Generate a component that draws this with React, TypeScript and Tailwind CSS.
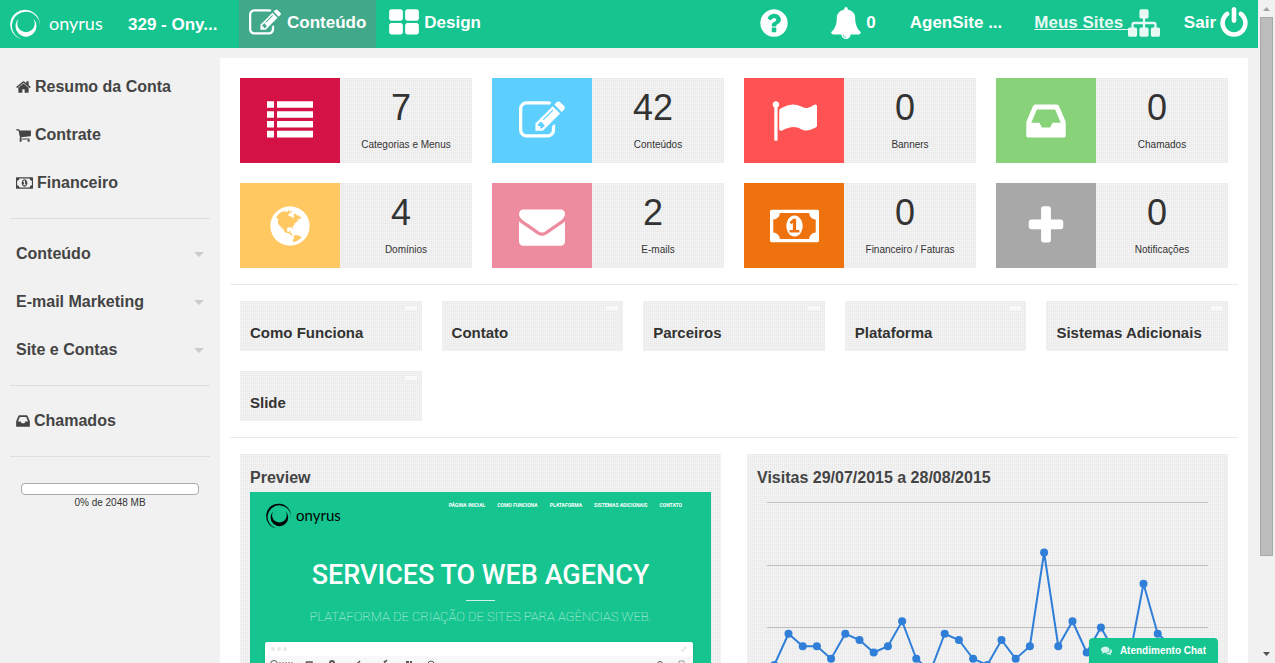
import type { ReactNode } from "react";

type IconProps = { d: string; className: string; x?: number; width?: number };

function Icon({ d, className, x = 0, width = 1792 }: IconProps) {
  return (
    <svg viewBox={`${x} 0 ${width} 1792`} className={className} fill="currentColor" aria-hidden="true">
      <path d={d} />
    </svg>
  );
}

const EDIT =
  "M888 1184l116-116-152-152-116 116v56h96v96h56zm440-720q-16-16-33 1l-350 350q-17 17-1 33t33-1l350-350q17-17 1-33zm80 594v190q0 119-84.5 203.5t-203.5 84.5h-832q-119 0-203.5-84.5t-84.5-203.5v-832q0-119 84.5-203.5t203.5-84.5h832q63 0 117 25 15 7 18 23 3 17-9 29l-49 49q-14 14-32 8-23-6-45-6h-832q-66 0-113 47t-47 113v832q0 66 47 113t113 47h832q66 0 113-47t47-113v-126q0-13 9-22l64-64q15-15 35-7t20 29zm-96-738l288 288-672 672h-288v-288zm444 132l-92 92-288-288 92-92q28-28 68-28t68 28l152 152q28 28 28 68t-28 68z";
const GRID =
  "M832 1024v384q0 52-38 90t-90 38h-512q-52 0-90-38t-38-90v-384q0-52 38-90t90-38h512q52 0 90 38t38 90zm0-768v384q0 52-38 90t-90 38h-512q-52 0-90-38t-38-90v-384q0-52 38-90t90-38h512q52 0 90 38t38 90zm896 768v384q0 52-38 90t-90 38h-512q-52 0-90-38t-38-90v-384q0-52 38-90t90-38h512q52 0 90 38t38 90zm0-768v384q0 52-38 90t-90 38h-512q-52 0-90-38t-38-90v-384q0-52 38-90t90-38h512q52 0 90 38t38 90z";
const QUESTION =
  "M1024 1376v-192q0-14-9-23t-23-9h-192q-14 0-23 9t-9 23v192q0 14 9 23t23 9h192q14 0 23-9t9-23zm256-672q0-88-55.5-163t-138.5-116-170-41q-243 0-371 213-15 24 8 42l132 100q7 6 19 6 16 0 25-12 53-68 86-92 34-24 86-24 48 0 85.5 26t37.5 59q0 38-20 61t-68 45q-63 28-115.5 86.5t-52.5 125.5v36q0 14 9 23t23 9h192q14 0 23-9t9-23q0-19 21.5-49.5t54.5-49.5q32-18 49-28.5t46-35 44.5-48 28-60.5 12.5-81zm384 192q0 209-103 385.5t-279.5 279.5-385.5 103-385.5-103-279.5-279.5-103-385.5 103-385.5 279.5-279.5 385.5-103 385.5 103 279.5 279.5 103 385.5z";
const BELL =
  "M912 1696q0-16-16-16-59 0-101.5-42.5t-42.5-101.5q0-16-16-16t-16 16q0 73 51.5 124.5t124.5 51.5q16 0 16-16zm816-288q0 52-38 90t-90 38h-448q0 106-75 181t-181 75-181-75-75-181h-448q-52 0-90-38t-38-90q50-42 91-88t85-119.5 74.5-158.5 50-206 19.5-260q0-152 117-282.5t307-158.5q-8-19-8-39 0-40 28-68t68-28 68 28 28 68q0 20-8 39 190 28 307 158.5t117 282.5q0 139 19.5 260t50 206 74.5 158.5 85 119.5 91 88z";
const SITEMAP =
  "M1792 1248v320q0 40-28 68t-68 28h-320q-40 0-68-28t-28-68v-320q0-40 28-68t68-28h96v-192h-512v192h96q40 0 68 28t28 68v320q0 40-28 68t-68 28h-320q-40 0-68-28t-28-68v-320q0-40 28-68t68-28h96v-192h-512v192h96q40 0 68 28t28 68v320q0 40-28 68t-68 28h-320q-40 0-68-28t-28-68v-320q0-40 28-68t68-28h96v-192q0-52 38-90t90-38h512v-192h-96q-40 0-68-28t-28-68v-320q0-40 28-68t68-28h320q40 0 68 28t28 68v320q0 40-28 68t-68 28h-96v192h512q52 0 90 38t38 90v192h96q40 0 68 28t28 68z";
const POWER =
  "M1664 896q0 156-61 298t-164 245-245 164-298 61-298-61-245-164-164-245-61-298q0-182 80.5-343t226.5-270q43-32 95.5-25t83.5 50q32 42 24.5 94.5t-49.5 84.5q-98 74-151.5 181t-53.5 228q0 104 40.5 198.5t109.5 163.5 163.5 109.5 198.5 40.5 198.5-40.5 163.5-109.5 109.5-163.5 40.5-198.5q0-121-53.5-228t-151.5-181q-42-32-49.5-84.5t24.5-94.5q31-43 84-50t95 25q146 109 226.5 270t80.5 343zm-640-768v640q0 52-38 90t-90 38-90-38-38-90v-640q0-52 38-90t90-38 90 38 38 90z";
const HOME =
  "M1472 992v480q0 26-19 45t-45 19h-384v-384h-256v384h-384q-26 0-45-19t-19-45v-480q0-1 .5-3t.5-3l575-474 575 474q1 2 1 6zm223-69l-62 74q-8 9-21 11h-3q-13 0-21-7l-692-577-692 577q-12 8-24 7-13-2-21-11l-62-74q-8-10-7-23.5t11-21.5l719-599q32-26 76-26t76 26l244 204v-195q0-14 9-23t23-9h192q14 0 23 9t9 23v408l219 182q10 8 11 21.5t-7 23.5z";
const CART =
  "M704 1536q0 52-38 90t-90 38-90-38-38-90 38-90 90-38 90 38 38 90zm896 0q0 52-38 90t-90 38-90-38-38-90 38-90 90-38 90 38 38 90zm128-1088v512q0 24-16.5 42.5t-40.5 21.5l-1044 122q13 60 13 70 0 16-24 64h920q26 0 45 19t19 45-19 45-45 19h-1024q-26 0-45-19t-19-45q0-11 8-31.5t16-36 21.5-40 15.5-29.5l-177-823h-204q-26 0-45-19t-19-45 19-45 45-19h256q16 0 28.5 6.5t19.5 15.5 13 24.5 8 26 5.5 29.5 4.5 26h1201q26 0 45 19t19 45z";
const MONEY =
  "M768 1152h384v-96h-128v-448h-114l-148 137 77 80q42-37 55-57h2v288h-128v96zm512-256q0 70-21 142t-59.5 134-101.5 101-138 39-138-39-101.5-101-59.5-134-21-142 21-142 59.5-134 101.5-101 138-39 138 39 101.5 101 59.5 134 21 142zm512 256v-512q-106 0-181-75t-75-181h-1152q0 106-75 181t-181 75v512q106 0 181 75t75 181h1152q0-106 75-181t181-75zm128-832v1152q0 26-19 45t-45 19h-1792q-26 0-45-19t-19-45v-1152q0-26 19-45t45-19h1792q26 0 45 19t19 45z";
const INBOX =
  "M1151 960h316q-1-3-2.5-8t-2.5-8l-212-496h-708l-212 496q-1 2-2.5 8t-2.5 8h316l95 192h320zm513 30v482q0 26-19 45t-45 19h-1408q-26 0-45-19t-19-45v-482q0-62 25-123l238-552q10-25 36.5-42t52.5-17h832q26 0 52.5 17t36.5 42l238 552q25 61 25 123z";
const FLAG =
  "M320 256q0 72-64 110v1266q0 13-9.5 22.5t-22.5 9.5h-64q-13 0-22.5-9.5t-9.5-22.5v-1266q-64-38-64-110 0-53 37.5-90.5t90.5-37.5 90.5 37.5 37.5 90.5zm1472 64v763q0 25-12.5 38.5t-39.5 27.5q-215 116-369 116-61 0-123.5-22t-108.5-48-115.5-48-142.5-22q-192 0-464 146-17 9-33 9-26 0-45-19t-19-45v-742q0-32 31-55 21-14 79-43 236-120 421-120 107 0 200 29t219 88q38 19 88 19 54 0 117.5-21t110-47 88-47 54.5-21q26 0 45 19t19 45z";
const GLOBE =
  "M896 128q209 0 385.5 103t279.5 279.5 103 385.5-103 385.5-279.5 279.5-385.5 103-385.5-103-279.5-279.5-103-385.5 103-385.5 279.5-279.5 385.5-103zm274 521q-2 1-9.5 9.5t-13.5 9.5q2 0 4.5-5t5-11 3.5-7q6-7 22-15 14-6 52-12 34-8 51 11-2-2 9.5-13t14.5-12q3-2 15-4.5t15-7.5l2-22q-12 1-17.5-7t-6.5-21q0 2-6 8 0-7-4.5-8t-11.5 1-9 1q-10-3-15-7.5t-8-16.5-4-15q-2-5-9.5-11t-9.5-10q-1-2-2.5-5.5t-3-6.5-4-5.5-5.5-2.5-7 5-7.5 10-4.5 5q-3-2-6-1.5t-4.5 1-4.5 3-5 3.5q-3 2-8.5 3t-8.5 2q15-5-1-11-10-4-16-3 9-4 7.5-12t-8.5-14h5q-1-4-8.5-8.5t-17.5-8.5-13-6q-8-5-34-9.5t-33-.5q-5 6-4.5 10.5t4 14 3.5 12.5q1 6-5.5 13t-6.5 12q0 7 14 15.5t10 21.5q-3 8-16 16t-16 12q-5 8-1.5 18.5t10.5 16.5q2 2 1.5 4t-3.5 4.5-5.5 4-6.5 3.5l-3 2q-11 5-20.5-6t-13.5-26q-7-25-16-30-23-8-29 1-5-13-41-26-25-9-58-4 6-1 0-15-7-15-19-12 3-6 4-17.5t1-13.5q3-13 12-23 1-1 7-8.5t9.5-13.5.5-6q35 4 50-11 5-5 11.5-17t10.5-17q9-6 14-5.5t14.5 5.5 14.5 5q14 1 15.5-11t-7.5-20q12 1 3-17-4-7-8-9-12-4-27 5-8 4 2 8-1-1-9.5 10.5t-16.5 17.5-16-5q-1-1-5.5-13.5t-9.5-13.5q-8 0-16 15 3-8-11-15t-24-8q19-12-8-27-7-4-20.5-5t-19.5 4q-5 7-5.5 11.5t5 8 10.5 5.5 11.5 4 8.5 3q14 10 8 14-2 1-8.5 3.5t-11.5 4.5-6 4q-3 4 0 14t-2 14q-5-5-9-17.5t-7-16.5q7 9-25 6l-10-1q-4 0-16 2t-20.5 1-13.5-8q-4-8 0-20 1-4 4-2-4-3-11-9.5t-10-8.5q-46 15-94 41 6 1 12-1 5-2 13-6.5t10-5.5q34-14 42-7l5-5q14 16 20 25-7-4-30-1-20 6-22 12 7 12 5 18-4-3-11.5-10t-14.5-11-15-5q-16 0-22 1-146 80-235 222 7 7 12 8 4 1 5 9t2.5 11 11.5-3q9 8 3 19 1-1 44 27 19 17 21 21 3 11-10 18-1-2-9-9t-9-4q-3 5 .5 18.5t10.5 12.5q-7 0-9.5 16t-2.5 35.5-1 23.5l2 1q-3 12 5.5 34.5t21.5 19.5q-13 3 20 43 6 8 8 9 3 2 12 7.5t15 10 10 10.5q4 5 10 22.5t14 23.5q-2 6 9.5 20t10.5 23q-1 0-2.5 1t-2.5 1q3 7 15.5 14t15.5 13q1 3 2 10t3 11 8 2q2-20-24-62-15-25-17-29-3-5-5.5-15.5t-4.5-14.5q2 0 6 1.5t8.5 3.5 7.5 4 2 3q-3 7 2 17.5t12 18.5 17 19 12 13q6 6 14 19.5t0 13.5q9 0 20 10.5t17 19.5q5 8 8 26t5 24q2 7 8.5 13.5t12.5 9.5l16 8 13 7q5 2 18.5 10.5t21.5 11.5q10 4 16 4t14.5-2.5 13.5-3.5q15-2 29 15t21 21q36 19 55 11-2 1 .5 7.5t8 15.5 9 14.5 5.5 8.5q5 6 18 15t18 15q6-4 7-9-3 8 7 20t18 10q14-3 14-32-31 15-49-18 0-1-2.5-5.5t-4-8.5-2.5-8.5 0-7.5 5-3q9 0 10-3.5t-2-12.5-4-13q-1-8-11-20t-12-15q-5 9-16 8t-16-9q0 1-1.5 5.5t-1.5 6.5q-13 0-15-1 1-3 2.5-17.5t3.5-22.5q1-4 5.5-12t7.5-14.5 4-12.5-4.5-9.5-17.5-2.5q-19 1-26 20-1 3-3 10.5t-5 11.5-9 7q-7 3-24 2t-24-5q-13-8-22.5-29t-9.5-37q0-10 2.5-26.5t3-25-5.5-24.5q3-2 9-9.5t10-10.5q2-1 4.5-1.5t4.5 0 4-1.5 3-6q-1-1-4-3-3-3-4-3 7 3 28.5-1.5t27.5 1.5q15 11 22-2 0-1-2.5-9.5t-.5-13.5q5 27 29 9 3 3 15.5 5t17.5 5q3 2 7 5.5t5.5 4.5 5-.5 8.5-6.5q10 14 12 24 11 40 19 44 7 3 11 2t4.5-9.5 0-14-1.5-12.5l-1-8v-18l-1-8q-15-3-18.5-12t1.5-18.5 15-18.5q1-1 8-3.5t15.5-6.5 12.5-8q21-19 15-35 7 0 11-9-1 0-5-3t-7.5-5-4.5-2q9-5 2-16 5-3 7.5-11t7.5-10q9 12 21 2 8-8 1-16 5-7 20.5-10.5t18.5-9.5q7 2 8-2t1-12 3-12q4-5 15-9t13-5l17-11q3-4 0-4 18 2 31-11 10-11-6-20 3-6-3-9.5t-15-5.5q3-1 11.5-.5t10.5-1.5q15-10-7-16-17-5-43 12zm-163 877q206-36 351-189-3-3-12.5-4.5t-12.5-3.5q-18-7-24-8 1-7-2.5-13t-8-9-12.5-8-11-7q-2-2-7-6t-7-5.5-7.5-4.5-8.5-2-10 1l-3 1q-3 1-5.5 2.5t-5.5 3-4 3 0 2.5q-21-17-36-22-5-1-11-5.5t-10.5-7-10-1.5-11.5 7q-5 5-6 15t-2 13q-7-5 0-17.5t2-18.5q-3-6-10.5-4.5t-12 4.5-11.5 8.5-9 6.5-8.5 5.5-8.5 7.5q-3 4-6 12t-5 11q-2-4-11.5-6.5t-9.5-5.5q2 10 4 35t5 38q7 31-12 48-27 25-29 40-4 22 12 26 0 7-8 20.5t-7 21.5q0 6 2 16z";
const ENVELOPE =
  "M1792 710v794q0 66-47 113t-113 47h-1472q-66 0-113-47t-47-113v-794q44 49 101 87 362 246 497 345 57 42 92.5 65.5t94.5 48 110 24.5h2q51 0 110-24.5t94.5-48 92.5-65.5q170-123 498-345 57-39 100-87zm0-294q0 79-49 151t-122 123q-376 261-468 325-10 7-42.5 31t-54 38.5-52 32.5-57.5 27-50 9h-2q-23 0-50-9t-57.5-27-52-32.5-54-38.5-42.5-31q-91-64-262-182.5t-205-142.5q-62-42-117-115.5t-55-136.5q0-78 41.5-130t118.5-52h1472q65 0 112.5 47t47.5 113z";
const LIST =
  "M0 128h272v256h-272zm390 0h1402v256h-1402zm-390 384h272v256h-272zm390 0h1402v256h-1402zm-390 384h272v256h-272zm390 0h1402v256h-1402zm-390 384h272v256h-272zm390 0h1402v256h-1402z";
const PLUS =
  "M1568 736v192q0 40-28 68t-68 28h-384v416q0 40-28 68t-68 28h-192q-40 0-68-28t-28-68v-416h-384q-40 0-68-28t-28-68v-192q0-40 28-68t68-28h384v-416q0-40 28-68t68-28h192q40 0 68 28t28 68v416h384q40 0 68 28t28 68z";
const COMMENTS =
  "M1408 768q0 139-94 257t-256.5 186.5-353.5 68.5q-86 0-176-16-124 88-278 128-36 9-86 16h-3q-11 0-20.5-8t-11.5-21q-1-3-1-6.5t.5-6.5 2-6l2.5-5 3.5-5.5 4-5 4.5-5 4-4.5q5-6 23-25t26-29.5 22.5-29 25-38.5 20.5-44q-124-72-195-177t-71-224q0-139 94-257t256.5-186.5 353.5-68.5 353.5 68.5 256.5 186.5 94 257zm384 256q0 120-71 224.5t-195 176.5q10 24 20.5 44t25 38.5 22.5 29 26 29.5 23 25q1 1 4 4.5t4.5 5 4 5 3.5 5.5l2.5 5 2 6 .5 6.5-1 6.5q-3 14-13 22t-22 7q-50-7-86-16-154-40-278-128-90 16-176 16-271 0-472-132 58 4 88 4 161 0 309-45t264-129q125-92 192-212t67-254q0-77-23-152 129 71 204 178t75 230z";

const DOTTED = "bg-[conic-gradient(#e6e6e6_25%,#f2f2f2_0)] bg-[length:2px_2px]";

function LogoMark({ className }: { className: string }) {
  return (
    <svg viewBox="0 0 32 32" className={className} fill="currentColor" aria-hidden="true">
      <path d="M30.8 17A15.3 15.3 0 1 0 12 31A14.4 14.4 0 1 1 30.8 17z" />
      <path d="M9 10A10.8 10.8 0 1 0 24 10A9 9 0 1 1 9 10z" />
    </svg>
  );
}

function Header() {
  return (
    <header className="flex h-12 shrink-0 items-stretch bg-[#15c48f] text-[17px] leading-6 font-bold text-white">
      <a href="#inicio" className="flex w-[118px] items-center gap-2 pl-2.5">
        <LogoMark className="size-[31px]" />
        <span className="pb-0.5 font-['Lato'] text-lg leading-6 font-normal">onyrus</span>
      </a>
      <a href="#site" className="flex w-[121px] items-center pt-0.5 pl-2.5">
        329 - Ony...
      </a>
      <nav className="flex flex-1 items-stretch">
        <a href="#conteudo" className="flex items-center gap-1.5 bg-[#41a98a] px-2.5 pb-0.5">
          <Icon d={EDIT} className="size-8" />
          Conteúdo
        </a>
        <a href="#design" className="flex items-center gap-1 px-3 pb-0.5">
          <Icon d={GRID} className="size-8" />
          Design
        </a>
      </nav>
      <div className="flex items-center pr-2 pb-0.5">
        <button type="button" aria-label="Ajuda" className="mr-10">
          <Icon d={QUESTION} className="size-8" />
        </button>
        <button type="button" aria-label="Alertas" className="mr-[34px] flex items-center gap-1">
          <Icon d={BELL} className="size-8" />0
        </button>
        <a href="#conta" className="mr-8">
          AgenSite ...
        </a>
        <a href="#sites" className="mr-6 flex items-center opacity-90">
          <span className="underline">Meus Sites&nbsp;</span>
          <Icon d={SITEMAP} className="size-8" />
        </a>
        <a href="#sair" className="flex items-center gap-0.5">
          Sair
          <Icon d={POWER} className="size-8" />
        </a>
      </div>
    </header>
  );
}

function NavItem({ children, menu = false }: { children: ReactNode; menu?: boolean }) {
  return (
    <a href="#item" className="flex h-12 items-center gap-1 px-1.5 pt-0.5">
      {children}
      {menu && (
        <svg viewBox="0 0 10 5" className="ml-auto h-[5px] w-2.5 text-[#cccccc]" fill="currentColor" aria-hidden="true">
          <path d="M0 0h10l-5 5z" />
        </svg>
      )}
    </a>
  );
}

function Sidebar() {
  return (
    <aside className="w-[220px] shrink-0 px-2.5 pt-3.5">
      <nav className="text-base leading-6 font-bold text-[#444444]">
        <div className="border-b border-[#dedede] pb-3">
          <NavItem>
            <Icon d={HOME} x={64} width={1664} className="h-4 w-[15px]" />
            Resumo da Conta
          </NavItem>
          <NavItem>
            <Icon d={CART} x={64} width={1664} className="h-4 w-[15px]" />
            Contrate
          </NavItem>
          <NavItem>
            <Icon d={MONEY} width={1920} className="h-4 w-[17px]" />
            Financeiro
          </NavItem>
        </div>
        <div className="border-b border-[#dedede] pt-2.5 pb-3">
          <NavItem menu>Conteúdo</NavItem>
          <NavItem menu>E-mail Marketing</NavItem>
          <NavItem menu>Site e Contas</NavItem>
        </div>
        <div className="border-b border-[#dedede] pt-2.5 pb-3">
          <NavItem>
            <Icon d={INBOX} x={128} width={1536} className="h-4 w-3.5" />
            Chamados
          </NavItem>
        </div>
      </nav>
      <div className="mx-[11px] mt-[26px] h-3 rounded-[4px] border border-[#aaaaaa] bg-white" />
      <p className="text-center text-[10px] leading-4 text-[#333333]">0% de 2048 MB</p>
    </aside>
  );
}

const stats = [
  { value: 7, label: "Categorias e Menus", bg: "bg-[#d51245]", icon: LIST },
  { value: 42, label: "Conteúdos", bg: "bg-[#5ccfff]", icon: EDIT },
  { value: 0, label: "Banners", bg: "bg-[#ff5252]", icon: FLAG },
  { value: 0, label: "Chamados", bg: "bg-[#88d27a]", icon: INBOX },
  { value: 4, label: "Domínios", bg: "bg-[#ffc861]", icon: GLOBE },
  { value: 2, label: "E-mails", bg: "bg-[#ed8c9e]", icon: ENVELOPE },
  { value: 0, label: "Financeiro / Faturas", bg: "bg-[#ee730f]", icon: MONEY },
  { value: 0, label: "Notificações", bg: "bg-[#a8a8a8]", icon: PLUS },
];

function Stats() {
  return (
    <section className="grid grid-cols-4 gap-5 px-2.5">
      {stats.map((s) => (
        <a key={s.label} href="#stat" className={`flex h-[85px] ${DOTTED}`}>
          <span className={`flex w-[100px] shrink-0 items-center justify-center text-white ${s.bg}`}>
            <Icon
              d={s.icon}
              width={s.icon === MONEY ? 1920 : 1792}
              className={s.icon === MONEY ? "h-[46px] w-[49px]" : "size-[46px]"}
            />
          </span>
          <span className="flex flex-1 flex-col text-center text-[#333333]">
            <span className="pt-2 pr-2.5 text-4xl leading-[44px]">{s.value}</span>
            <span className="pt-[7px] text-[10px] leading-4">{s.label}</span>
          </span>
        </a>
      ))}
    </section>
  );
}

const tiles = ["Como Funciona", "Contato", "Parceiros", "Plataforma", "Sistemas Adicionais", "Slide"];

function Tiles() {
  return (
    <section className="grid grid-cols-5 gap-5 px-2.5">
      {tiles.map((t) => (
        <a key={t} href="#pagina" className={`flex h-[50px] flex-col px-2.5 pt-[5px] text-[#333333] ${DOTTED}`}>
          <span className="-mr-[5px] h-1 w-3 self-end bg-white/60" />
          <span className="pt-3 text-[15px] leading-[22px] font-bold">{t}</span>
        </a>
      ))}
    </section>
  );
}

const siteLinks = ["PÁGINA INICIAL", "COMO FUNCIONA", "PLATAFORMA", "SISTEMAS ADICIONAIS", "CONTATO"];

function Preview() {
  return (
    <section className={`h-[360px] px-2.5 pt-3 ${DOTTED}`}>
      <h2 className="pb-0.5 text-base leading-6 font-bold text-[#444444]">Preview</h2>
      <div className="h-[300px] overflow-hidden bg-[#15c48f] font-['Roboto'] text-white">
        <div className="flex items-start justify-between pt-[11px] pr-[29px] pl-4">
          <div className="flex items-center gap-1 text-black">
            <LogoMark className="size-[26px]" />
            <span className="pb-0.5 font-['Lato'] text-[15px] leading-5">onyrus</span>
          </div>
          <nav className="flex gap-3 text-[5px] leading-1 font-bold">
            {siteLinks.map((l) => (
              <a key={l} href="#secao">
                {l}
              </a>
            ))}
          </nav>
        </div>
        <h3 className="pt-7 text-center text-[27px] leading-9 font-medium">SERVICES TO WEB AGENCY</h3>
        <div className="mx-auto mt-[7px] h-px w-[29px] bg-white/80" />
        <p className="pt-1.5 text-center text-[13px] leading-5 font-thin text-white/80">
          PLATAFORMA DE CRIAÇÃO DE SITES PARA AGÊNCIAS WEB.
        </p>
        <div className="mt-[15px] mr-[18px] ml-[15px] rounded-t-[2px] bg-white shadow">
          <div className="flex h-3.5 items-center gap-0.5 px-1.5">
            <span className="size-1 rounded-full bg-[#e8e8e8]" />
            <span className="size-1 rounded-full bg-[#e8e8e8]" />
            <span className="size-1 rounded-full bg-[#e8e8e8]" />
            <svg viewBox="0 0 6 6" className="ml-auto size-1.5" fill="none" stroke="#dddddd" aria-hidden="true">
              <path d="M1 5l4-4M3 1h2v2M1 3v2h2" />
            </svg>
          </div>
          <svg viewBox="0 0 428 40" className="block w-full bg-[#f8f8f8]" fill="none" stroke="#555" aria-hidden="true">
            <circle cx="9" cy="8" r="3.5" />
            <path d="M14 7.5h14" strokeWidth="2" strokeDasharray="2 1" />
            <path d="M41 6h6v5M42 8l-1-2" strokeWidth="1.5" />
            <circle cx="67" cy="7" r="2" strokeWidth="2" />
            <path d="M91 9l4-4M117 9l5-5M119 5l3 4" strokeWidth="1.5" />
            <path d="M141 6h6M141 9h6" strokeWidth="2" strokeDasharray="3 1" />
            <circle cx="166" cy="8" r="3" />
            <circle cx="395" cy="8" r="2.5" />
            <path d="M414 10v-5h5v5" stroke="#999" />
          </svg>
        </div>
      </div>
    </section>
  );
}

const visits = [4, 9, 7, 7, 5, 9, 8, 6, 7, 11, 5, 3, 9, 8, 5, 4, 8, 5, 7, 22, 7, 11, 6, 10, 6, 5, 17, 9, 7, 5];

function Visits() {
  const points = visits.map((v, i) => [27.3 + i * 14.2, 200 - v * 6.25]);
  return (
    <section className={`h-[360px] pt-3 ${DOTTED}`}>
      <h2 className="px-2.5 text-base leading-6 font-bold text-[#444444]">Visitas 29/07/2015 a 28/08/2015</h2>
      <svg viewBox="0 0 481 230" className="block w-full" role="img" aria-label="Visitas por dia">
        {[12.5, 75.5, 137.5, 200.5].map((y) => (
          <path key={y} d={`M20 ${y}H461`} stroke="#c0c0c0" />
        ))}
        <polyline points={points.map((p) => p.join(",")).join(" ")} fill="none" stroke="#2f7ed8" strokeWidth="2" />
        {points.map(([x, y]) => (
          <circle key={x} cx={x} cy={y} r="4" fill="#2f7ed8" />
        ))}
      </svg>
    </section>
  );
}

function Scrollbar() {
  return (
    <div className="flex w-[17px] shrink-0 flex-col items-center bg-[#f1f1f1]" aria-hidden="true">
      <svg viewBox="0 0 17 17" className="size-[17px] shrink-0" fill="#a3a3a3">
        <path d="M5 11h7l-3.500-4z" />
      </svg>
      <div className="w-[13px] grow-[540] border border-[#a8a8a8] bg-[#bcbcbc]" />
      <div className="grow-[90]" />
      <svg viewBox="0 0 17 17" className="size-[17px] shrink-0" fill="#505050">
        <path d="M5 6h7l-3.500 4z" />
      </svg>
    </div>
  );
}

export default function App() {
  return (
    <div className="flex h-screen bg-[#f1f1f1] font-['Liberation_Sans',Arial,sans-serif]">
      <div className="relative flex min-w-0 flex-1 flex-col overflow-hidden">
        <Header />
        <div className="flex min-h-0 flex-1">
          <Sidebar />
          <main className="mt-2.5 mr-2.5 min-w-0 flex-1 bg-white px-2.5 pt-5">
            <Stats />
            <hr className="my-4 border-[#e8e8e8]" />
            <Tiles />
            <hr className="my-4 border-[#e8e8e8]" />
            <div className="grid grid-cols-2 gap-[26px] px-2.5">
              <Preview />
              <Visits />
            </div>
          </main>
        </div>
        <button
          type="button"
          className="absolute right-10 bottom-0 flex h-[25px] items-center gap-2 rounded-t-[4px] bg-[#15c48f] px-3 text-[10px] font-bold text-white"
        >
          <Icon d={COMMENTS} className="size-[11px] opacity-80" />
          Atendimento Chat
        </button>
      </div>
      <Scrollbar />
    </div>
  );
}
